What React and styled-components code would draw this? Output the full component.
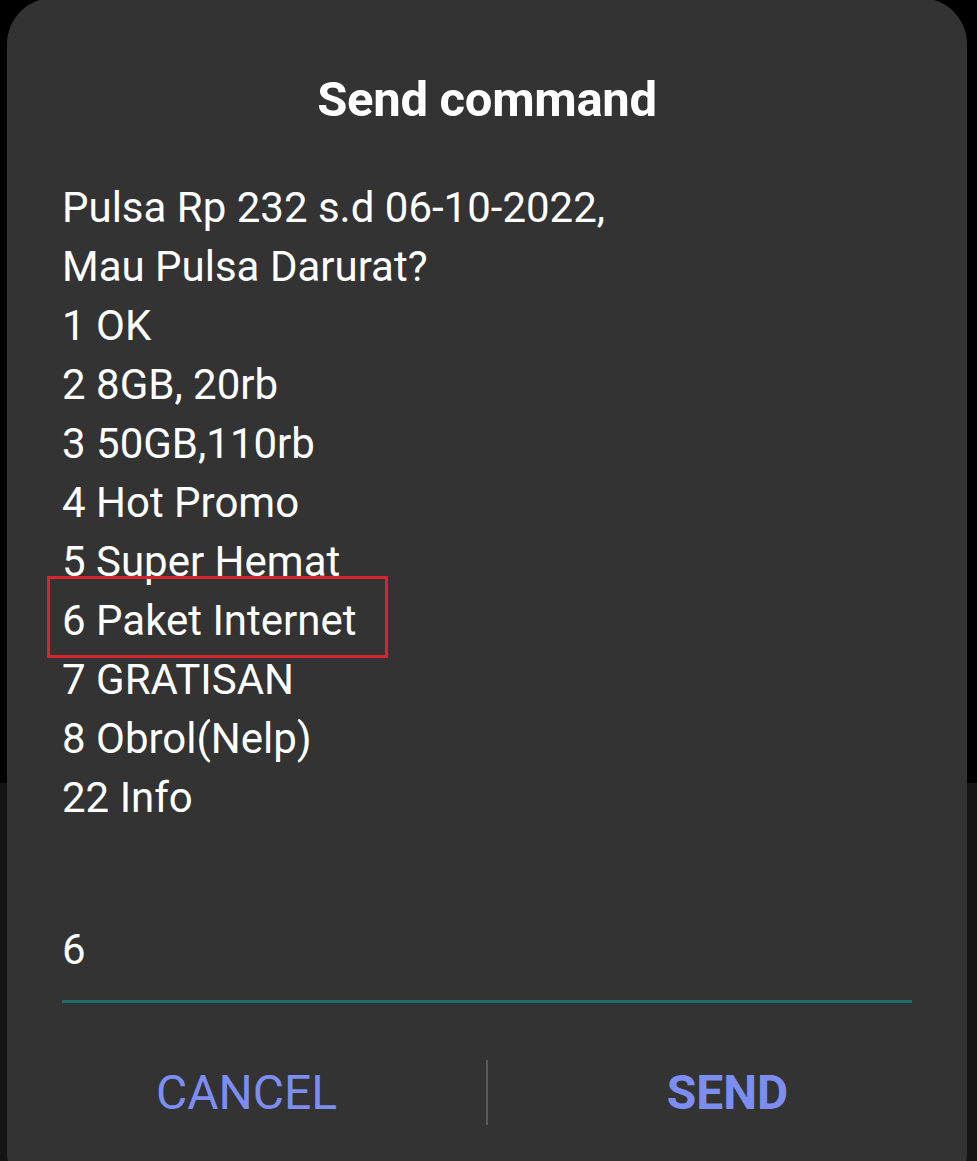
import React from 'react';
import styled, { createGlobalStyle } from 'styled-components';

const GlobalStyle = createGlobalStyle`
  html, body {
    margin: 0;
    padding: 0;
  }
  body {
    background: linear-gradient(#000 0, #000 783px, #141414 783px);
    font-family: Roboto, "Noto Sans", sans-serif;
    overflow: hidden;
  }
`

const Screen = styled.div`
  width: 977px;
  height: 1161px;
  overflow: hidden;
  padding: 0 10px 0 7px;
  box-sizing: border-box;
`

const Dialog = styled.div`
  background: #333333;
  border-radius: 46px;
  height: 1200px;
  margin-top: -2px;
  padding: 72px 55px 0 55px;
  box-sizing: border-box;
  display: flex;
  flex-direction: column;
`

const Title = styled.h1`
  margin: 0;
  text-align: center;
  color: #fff;
  font-size: 49px;
  font-weight: 700;
  line-height: 60px;
  letter-spacing: -0.3px;
`

const Message = styled.div`
  margin-top: 48px;
  color: #fff;
  font-size: 42px;
  line-height: 59px;
`

const Line = styled.div`
  position: relative;
  white-space: nowrap;
`

// red annotation box drawn over the chosen option
const Highlight = styled.span`
  position: relative;
  &::after {
    content: '';
    position: absolute;
    left: -15px;
    right: -31px;
    top: -20px;
    bottom: -13px;
    border: 3px solid #d9232e;
  }
`

const Input = styled.div`
  margin-top: 93px;
  color: #fff;
  font-size: 42px;
  line-height: 59px;
  padding-bottom: 21px;
  border-bottom: 3px solid #1e6b6b;
`

const Actions = styled.div`
  margin-top: 47px;
  height: 84px;
  display: flex;
  align-items: center;
  margin-left: -55px;
  margin-right: -55px;
`

const Action = styled.button`
  flex: 1;
  background: none;
  border: none;
  color: #7d8ef2;
  font-family: Roboto, "Noto Sans", sans-serif;
  font-size: 48px;
  font-weight: ${p => (p.primary ? 700 : 400)};
  padding: 0;
  height: 100%;
`

const Divider = styled.div`
  width: 2px;
  height: 65px;
  background: #5a5a5a;
`

const lines = [
  'Pulsa Rp 232 s.d 06-10-2022,',
  'Mau Pulsa Darurat?',
  '1 OK',
  '2 8GB, 20rb',
  '3 50GB,110rb',
  '4 Hot Promo',
  '5 Super Hemat',
  '6 Paket Internet',
  '7 GRATISAN',
  '8 Obrol(Nelp)',
  '22 Info',
];

export default function App() {
  return (
    <Screen>
      <GlobalStyle />
      <Dialog>
        <Title>Send command</Title>
        <Message>
          {lines.map(l => (
            <Line key={l}>
              {l.startsWith('6 ') ? <Highlight>{l}</Highlight> : l}
            </Line>
          ))}
        </Message>
        <Input>6</Input>
        <Actions>
          <Action>CANCEL</Action>
          <Divider />
          <Action primary>SEND</Action>
        </Actions>
      </Dialog>
    </Screen>
  );
}
